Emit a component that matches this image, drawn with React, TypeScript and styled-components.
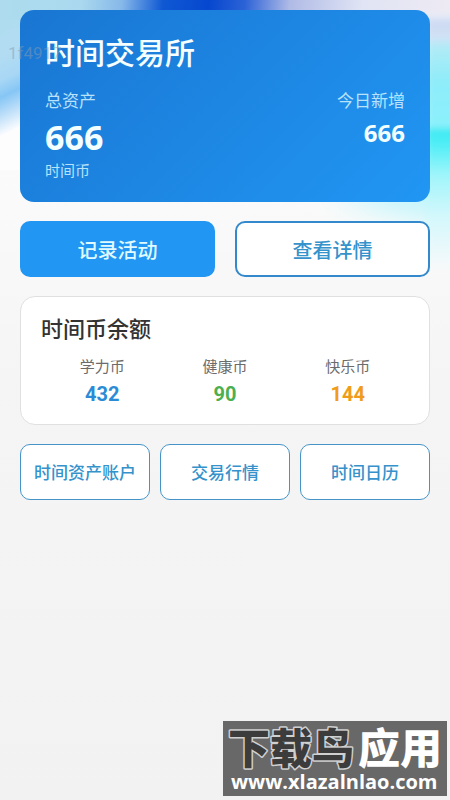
import React from "react";
import styled, { createGlobalStyle } from "styled-components";

const GlobalStyle = createGlobalStyle`
  * { box-sizing: border-box; }
  body {
    margin: 0;
    background: #f3f3f3;
    font-family: Roboto, "Noto Sans CJK SC", sans-serif;
  }
  button, h1, h2, p, dl, dt, dd { margin: 0; font: inherit; }
`;

const Page = styled.div`
  position: relative;
  isolation: isolate;
  min-height: 100vh;
  display: flex;
  flex-direction: column;
  background: linear-gradient(180deg, #fdfdfe 0, #fafafa 200px, #f5f5f5 380px, #f2f2f2 800px);
`;

const Wallpaper = styled.svg`
  position: absolute;
  inset: 0 0 auto 0;
  z-index: -1;
  width: 100%;
  height: 320px;
`;

const Content = styled.main`
  flex: 1;
  display: flex;
  flex-direction: column;
  gap: 19px;
  padding: 10px 20px;
`;

const Summary = styled.section`
  min-height: 192px;
  padding: 22px 25px 0;
  border-radius: 14px;
  background: linear-gradient(135deg, #1976d2, #2196f3);
  color: #f5ffff;
`;

const Title = styled.h1`
  && { font-size: 30px; font-weight: 500; line-height: 44px; }
`;

const Totals = styled.div`
  display: flex;
  justify-content: space-between;
  margin-top: 13px;
`;

const Total = styled.div<{ $end?: boolean }>`
  text-align: ${(p) => (p.$end ? "right" : "left")};
`;

const Caption = styled.p<{ $small?: boolean }>`
  && {
    font-size: ${(p) => (p.$small ? 15 : 17)}px;
    line-height: ${(p) => (p.$small ? 20 : 24)}px;
    color: #b9e2fb;
  }
`;

const Amount = styled.p<{ $large?: boolean }>`
  && {
    font-family: "Noto Sans", sans-serif;
    font-size: ${(p) => (p.$large ? 34 : 24)}px;
    line-height: ${(p) => (p.$large ? 48 : 40)}px;
    font-weight: 700;
    color: #f3ffff;
  }
`;

const Row = styled.div<{ $gap: number }>`
  display: flex;
  gap: ${(p) => p.$gap}px;
`;

const borders = {
  filled: "2px solid #2196f3",
  outlined: "2px solid #3489cd",
  compact: "1px solid #4594c8",
};

const Button = styled.button<{ $kind: keyof typeof borders }>`
  && {
    flex: 1 1 0;
    min-width: 0;
    height: 56px;
    padding: ${(p) => (p.$kind === "compact" ? "0 0 2px" : "0")};
    border: ${(p) => borders[p.$kind]};
    border-radius: 10px;
    background: ${(p) => (p.$kind === "filled" ? "#2196f3" : "#fff")};
    color: ${(p) => (p.$kind === "filled" ? "#e0fbff" : "#3592cb")};
    font-size: ${(p) => (p.$kind === "compact" ? 17 : 20)}px;
    font-weight: 500;
    white-space: nowrap;
    cursor: pointer;
  }
`;

const Balance = styled.section`
  min-height: 129px;
  padding: 17px 20px 0;
  border: 1px solid #e0e0e0;
  border-radius: 15px;
  background: #fff;
`;

const BalanceTitle = styled.h2`
  && { font-size: 22px; font-weight: 500; line-height: 32px; color: #333; }
`;

const Coins = styled.dl`
  display: flex;
  margin-top: 9px;
  text-align: center;
`;

const Coin = styled.div`
  flex: 1;
`;

const CoinName = styled.dt`
  && { font-size: 15px; line-height: 24px; color: #6b6b6b; }
`;

const CoinValue = styled.dd<{ $color: string }>`
  && { font-size: 20px; font-weight: 700; line-height: 30px; color: ${(p) => p.$color}; }
`;

const DeviceMark = styled.span`
  position: absolute;
  top: 42px;
  left: 8px;
  font-size: 17px;
  line-height: 22px;
  color: rgba(135, 155, 175, 0.5);
`;

const SiteMark = styled.footer`
  position: absolute;
  right: 3px;
  bottom: 4px;
  width: 224px;
  height: 75px;
  background: #686868;
`;

const SiteLogo = styled.svg`
  display: block;
  width: 100%;
  height: 100%;
  font-family: "Noto Sans CJK SC", sans-serif;
  font-weight: 900;
`;

const SiteAddress = styled.text`
  font-family: "Open Sans", sans-serif;
  font-weight: 700;
`;

const coins = [
  { name: "学力币", value: 432, color: "#2b8bd6" },
  { name: "健康币", value: 90, color: "#4caf50" },
  { name: "快乐币", value: 144, color: "#f09c1a" },
];

const links = ["时间资产账户", "交易行情", "时间日历"];

export default function App() {
  return (
    <>
      <GlobalStyle />
      <Page>
        <Wallpaper viewBox="0 0 450 320" preserveAspectRatio="none" aria-hidden="true">
          <defs>
            <filter id="soft" x="-50%" y="-50%" width="200%" height="200%"><feGaussianBlur stdDeviation="14" /></filter>
            <filter id="edge" x="-50%" y="-50%" width="200%" height="200%"><feGaussianBlur stdDeviation="3" /></filter>
            <linearGradient id="sweep" gradientUnits="userSpaceOnUse" x1="0" y1="0" x2="56" y2="112">
              <stop offset="0" stopColor="#aedcee" />
              <stop offset=".4" stopColor="#b2dcf2" />
              <stop offset=".58" stopColor="#a8d7f5" />
              <stop offset=".7" stopColor="#86c6f5" />
              <stop offset=".8" stopColor="#b0d8f8" />
              <stop offset=".98" stopColor="#fdfdfe" />
            </linearGradient>
            <linearGradient id="top" gradientUnits="userSpaceOnUse" x1="0" y1="0" x2="450" y2="40">
              <stop offset="0" stopColor="#aedcee" />
              <stop offset=".18" stopColor="#aad8ee" />
              <stop offset=".27" stopColor="#86b8e9" />
              <stop offset=".36" stopColor="#0f58d3" />
              <stop offset=".46" stopColor="#0647cf" />
              <stop offset=".54" stopColor="#2b62d6" />
              <stop offset=".64" stopColor="#b0bbe6" />
              <stop offset=".8" stopColor="#e0e4f4" />
              <stop offset="1" stopColor="#eeeaf3" />
            </linearGradient>
            <linearGradient id="side" gradientUnits="userSpaceOnUse" x1="0" y1="0" x2="0" y2="270">
              <stop offset="0" stopColor="#f0edf5" />
              <stop offset=".06" stopColor="#e8eef8" />
              <stop offset=".08" stopColor="#ccd9f2" />
              <stop offset=".14" stopColor="#d2e2f5" />
              <stop offset=".17" stopColor="#b2ebf7" />
              <stop offset=".3" stopColor="#8fecf9" />
              <stop offset=".47" stopColor="#8cf1fc" />
              <stop offset=".48" stopColor="#3fe8f1" />
              <stop offset=".53" stopColor="#4eeef6" />
              <stop offset=".65" stopColor="#a0f5fb" />
              <stop offset=".8" stopColor="#d3f8fc" />
              <stop offset="1" stopColor="#f8f9fa" />
            </linearGradient>
          </defs>
          <rect width="200" height="170" fill="url(#sweep)" />
          <rect width="450" height="20" fill="url(#top)" />
          <path d="M330 195L480 150V228L400 215Z" fill="#c2f6fc" filter="url(#soft)" />
          <rect x="426" y="14" width="40" height="256" fill="url(#side)" filter="url(#edge)" />
        </Wallpaper>
        <Content>
          <Summary>
            <Title>时间交易所</Title>
            <Totals>
              <Total>
                <Caption>总资产</Caption>
                <Amount $large>666</Amount>
                <Caption $small>时间币</Caption>
              </Total>
              <Total $end>
                <Caption>今日新增</Caption>
                <Amount>666</Amount>
              </Total>
            </Totals>
          </Summary>
          <Row $gap={20}>
            <Button $kind="filled">记录活动</Button>
            <Button $kind="outlined">查看详情</Button>
          </Row>
          <Balance>
            <BalanceTitle>时间币余额</BalanceTitle>
            <Coins>
              {coins.map((c) => (
                <Coin key={c.name}>
                  <CoinName>{c.name}</CoinName>
                  <CoinValue $color={c.color}>{c.value}</CoinValue>
                </Coin>
              ))}
            </Coins>
          </Balance>
          <Row $gap={10}>
            {links.map((label) => (
              <Button key={label} $kind="compact">{label}</Button>
            ))}
          </Row>
        </Content>
        <DeviceMark>1f4917</DeviceMark>
        <SiteMark>
          <SiteLogo viewBox="0 0 224 75">
            <text x="5" y="43" fontSize="42" fill="#3c3c3c" stroke="#d0d0d0" strokeWidth="3" strokeLinejoin="round" paintOrder="stroke">下载鸟</text>
            <text x="135" y="43" fontSize="42" fill="#fff">应用</text>
            <SiteAddress x="8" y="68" fontSize="20" fill="#fff">www.xlazalnlao.com</SiteAddress>
          </SiteLogo>
        </SiteMark>
      </Page>
    </>
  );
}
